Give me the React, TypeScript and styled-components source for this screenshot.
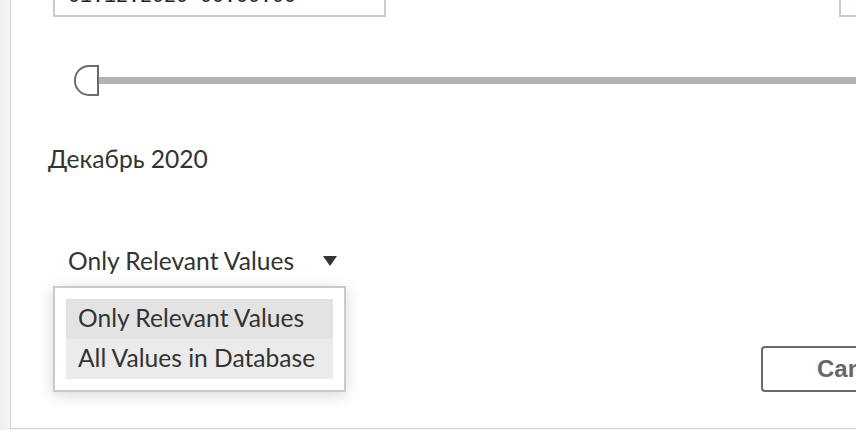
import React, { useState } from 'react';
import styled, { createGlobalStyle } from 'styled-components';

const GlobalStyle = createGlobalStyle`
  html, body {
    margin: 0;
    padding: 0;
    overflow: hidden;
  }
  body {
    background: #f3f3f3;
    font-family: Lato, "Noto Sans", sans-serif;
  }
`;

const Page = styled.div`
  width: 856px;
  height: 430px;
  overflow: hidden;
  box-sizing: border-box;
  padding-left: 10px;
  background: linear-gradient(to right, #eeeeee, #f6f6f6 10px);
`;

const Dialog = styled.section`
  width: 1200px;
  height: 429px;
  box-sizing: border-box;
  background: #fff;
  border-left: 1px solid #d2d2d2;
  border-bottom: 1px solid #d2d2d2;
  padding-left: 42px;
  display: flex;
  flex-direction: column;
`;

const DateRow = styled.div`
  display: flex;
  gap: 453px;
  margin-top: -23px;
`;

const DateInput = styled.div`
  flex: none;
  width: 333px;
  height: 40px;
  box-sizing: border-box;
  border: 2px solid #cbcbcb;
  padding-left: 13px;
  font-family: "Liberation Mono", monospace;
  font-size: 20px;
  line-height: 36px;
  color: #222;
`;

const SliderRow = styled.div`
  display: flex;
  align-items: center;
  margin: 48px 0 0 21px;
`;

const Thumb = styled.div`
  width: 25px;
  height: 31px;
  box-sizing: border-box;
  border: 2px solid #6b6b6b;
  border-radius: 15px 0 0 15px;
  background: #fff;
  flex: none;
`;

const Track = styled.div`
  flex: 1;
  height: 7px;
  background: #b3b3b3;
`;

const MonthLabel = styled.div`
  margin: 48px 0 0 -5px;
  font-size: 24.6px;
  line-height: 30px;
  color: #333;
`;

const Filter = styled.div`
  position: relative;
  margin-top: 72px;
`;

const Trigger = styled.button`
  display: flex;
  align-items: center;
  gap: 29px;
  padding: 0 0 0 15px;
  border: none;
  background: none;
  font-family: inherit;
  font-size: 24.6px;
  line-height: 30px;
  color: #333;
  cursor: pointer;
`;

const Menu = styled.ul`
  position: absolute;
  top: 40px;
  left: 0;
  width: 293px;
  box-sizing: border-box;
  margin: 0;
  padding: 11px;
  list-style: none;
  background: #fff;
  border: 2px solid #cacaca;
  box-shadow: 0 3px 14px rgba(0, 0, 0, 0.16);
  z-index: 2;
`;

const Item = styled.li<{ $active?: boolean }>`
  height: 40px;
  padding-left: 12px;
  font-size: 24.6px;
  line-height: 38px;
  color: #333;
  background: ${p => (p.$active ? '#e3e3e3' : '#ebebeb')};
`;

const Footer = styled.div`
  display: flex;
  gap: 16px;
  margin: 70px 0 0 708px;
`;

const Button = styled.button`
  flex: none;
  height: 46px;
  box-sizing: border-box;
  padding: 0 54px;
  border: 2px solid #6a6a6a;
  border-radius: 4px;
  background: #fff;
  font-family: "Liberation Sans", Arial, sans-serif;
  font-weight: bold;
  font-size: 24px;
  color: #666;
`;

const Caret = () => (
  <svg width="14" height="10" viewBox="0 0 14 10">
    <path d="M0 0 L14 0 L7 10 Z" fill="#333" />
  </svg>
);

const options = ['Only Relevant Values', 'All Values in Database'];

function App() {
  const [value, setValue] = useState(options[0]);
  const [open, setOpen] = useState(true);

  return (
    <>
      <GlobalStyle />
      <Page>
        <Dialog>
          <DateRow>
            <DateInput>01.12.2020 00:00:00</DateInput>
            <DateInput>31.12.2020 00:00:00</DateInput>
          </DateRow>
          <SliderRow>
            <Thumb />
            <Track />
          </SliderRow>
          <MonthLabel>Декабрь 2020</MonthLabel>
          <Filter>
            <Trigger onClick={() => setOpen(!open)}>
              {value}
              <Caret />
            </Trigger>
            {open && (
              <Menu>
                {options.map(o => (
                  <Item key={o} $active={o === value} onClick={() => setValue(o)}>
                    {o}
                  </Item>
                ))}
              </Menu>
            )}
          </Filter>
          <Footer>
            <Button>Cancel</Button>
            <Button>OK</Button>
          </Footer>
        </Dialog>
      </Page>
    </>
  );
}

export default App;
